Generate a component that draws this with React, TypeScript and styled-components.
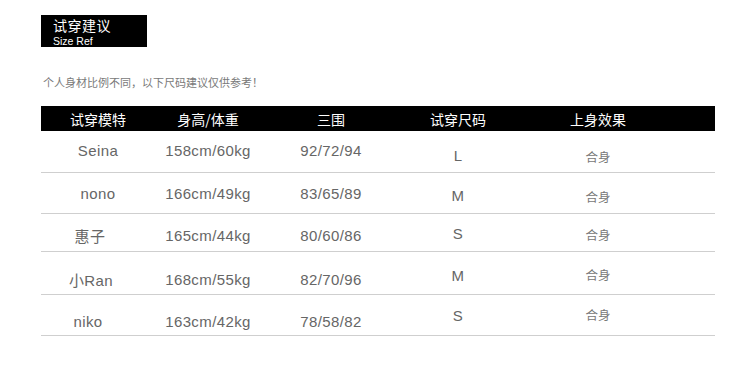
import styled, { createGlobalStyle } from "styled-components";

const Global = createGlobalStyle`
  body {
    margin: 0;
    background: #fff;
    font-family: "Liberation Sans", Arial, "Noto Sans CJK SC", sans-serif;
  }
`;

const Page = styled.div`
  width: 750px;
  height: 378px;
  padding: 15px 0 0 41px;
  box-sizing: border-box;
`;

const TitleBox = styled.div`
  width: 106px;
  height: 32px;
  background: #000;
  color: #fff;
  box-sizing: border-box;
  padding: 0 0 0 12px;
  display: flex;
  flex-direction: column;
`;

const TitleCn = styled.span`
  font-family: "Noto Sans CJK SC", sans-serif;
  font-size: 14px;
  line-height: 20px;
  letter-spacing: 0.5px;
`;

const TitleEn = styled.span`
  font-size: 10.5px;
  line-height: 12px;
`;

const Note = styled.div`
  margin-top: 27px;
  font-family: "Noto Sans CJK SC", sans-serif;
  font-size: 11px;
  line-height: 16px;
  color: #7a7a7a;
  padding-left: 2px;
`;

const Table = styled.div`
  margin-top: 16px;
  width: 674px;
`;

const Row = styled.div<{ $head?: boolean; $h: number }>`
  display: grid;
  grid-template-columns: 114px 106px 140px 114px 166px 1fr;
  height: ${(p) => p.$h}px;
  background: ${(p) => (p.$head ? "#000" : "transparent")};
  color: ${(p) => (p.$head ? "#fff" : "#666")};
  border-bottom: ${(p) => (p.$head ? "none" : "1px solid #cfcfcf")};
  box-sizing: border-box;
`;

const Cell = styled.div<{ $dx?: number; $dy?: number; $cn?: boolean; $small?: boolean }>`
  display: flex;
  align-items: center;
  justify-content: center;
  font-family: ${(p) =>
    p.$cn
      ? '"Noto Sans CJK SC", sans-serif'
      : '"Liberation Sans", Arial, "Noto Sans CJK SC", sans-serif'};
  font-size: ${(p) => (p.$small ? 12.5 : 15)}px;
  letter-spacing: ${(p) => (p.$cn ? 0 : 0.4)}px;
  color: ${(p) => (p.$small ? "#777" : "inherit")};
  transform: translate(${(p) => p.$dx ?? 0}px, ${(p) => p.$dy ?? 0}px);
`;

const HeadCell = styled(Cell)`
  font-family: "Noto Sans CJK SC", sans-serif;
  font-size: 14px;
  letter-spacing: 0;
`;

const heads = ["试穿模特", "身高/体重", "三围", "试穿尺码", "上身效果"];

const rows = [
  { name: "Seina", dx: 0, body: "158cm/60kg", bwh: "92/72/94", size: "L", h: 42, dy: [-1, -1, -1, 4, 5] },
  { name: "nono", dx: 0, body: "166cm/49kg", bwh: "83/65/89", size: "M", h: 41, dy: [0, 0, 0, 2, 3] },
  { name: "惠子", dx: -8, body: "165cm/44kg", bwh: "80/60/86", size: "S", h: 38, dy: [3, 3, 3, 1, 2] },
  { name: "小Ran", dx: -7, body: "168cm/55kg", bwh: "82/70/96", size: "M", h: 43, dy: [6, 6, 6, 2, 1] },
  { name: "niko", dx: -10, body: "163cm/42kg", bwh: "78/58/82", size: "S", h: 41, dy: [6, 6, 6, 0, -1] },
];

export default function App() {
  return (
    <Page>
      <Global />
      <TitleBox>
        <TitleCn>试穿建议</TitleCn>
        <TitleEn>Size Ref</TitleEn>
      </TitleBox>
      <Note>个人身材比例不同，以下尺码建议仅供参考！</Note>
      <Table>
        <Row $head $h={25}>
          {heads.map((h) => (
            <HeadCell key={h}>{h}</HeadCell>
          ))}
        </Row>
        {rows.map((r) => (
          <Row key={r.name} $h={r.h}>
            <Cell $dx={r.dx} $dy={r.dy[0]}>
              {r.name}
            </Cell>
            <Cell $dy={r.dy[1]}>{r.body}</Cell>
            <Cell $dy={r.dy[2]}>{r.bwh}</Cell>
            <Cell $dy={r.dy[3]}>{r.size}</Cell>
            <Cell $dy={r.dy[4]} $cn $small>
              合身
            </Cell>
          </Row>
        ))}
      </Table>
    </Page>
  );
}
